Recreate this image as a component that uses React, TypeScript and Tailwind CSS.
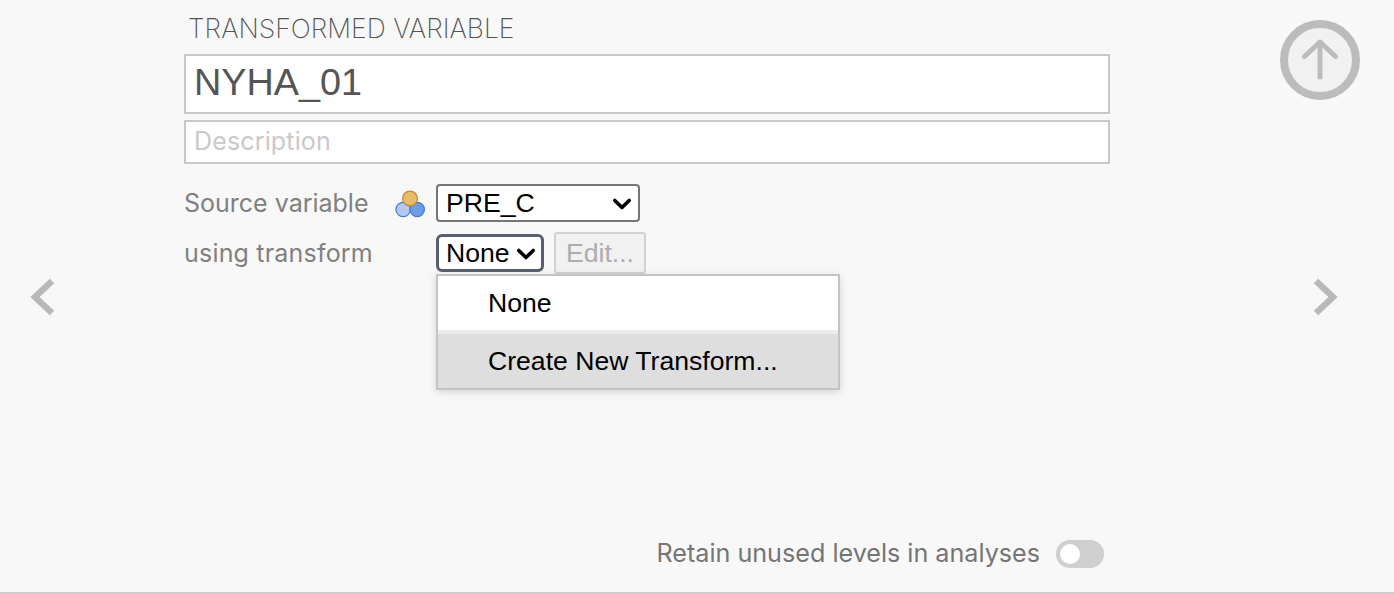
import React from 'react';

function SelectChevron() {
  return (
    <svg width="20" height="20" viewBox="0 0 20 20" fill="none" className="shrink-0">
      <path d="M2.8 6.5 L10 13.5 L17.2 6.5" stroke="#000" strokeWidth="3.6" strokeLinecap="round" strokeLinejoin="round" />
    </svg>
  );
}

function VariableIcon() {
  return (
    <svg width="32" height="32" viewBox="0 0 32 32" className="shrink-0">
      <circle cx="10.2" cy="21.5" r="7.2" fill="#b3c9ef" stroke="#3f77dc" strokeWidth="1.2" />
      <circle cx="24.2" cy="21.5" r="7.2" fill="#6f9be3" stroke="#3f77dc" strokeWidth="1.2" />
      <circle cx="17" cy="10.5" r="7.4" fill="#e8bb6b" stroke="#bd8c37" strokeWidth="1.2" />
    </svg>
  );
}

function NavChevron({ left }: { left?: boolean }) {
  return (
    <svg width="28" height="40" viewBox="0 0 28 40" fill="none">
      <path
        d={left ? 'M23 4 L6 20 L23 36' : 'M5 4 L22 20 L5 36'}
        stroke="#b9b9b9"
        strokeWidth="6.5"
        strokeLinejoin="miter"
      />
    </svg>
  );
}

export default function App() {
  return (
    <div className="h-[594px] w-[1394px] overflow-hidden bg-[#f8f8f8] font-['Inter',sans-serif]">
      <div className="flex h-[592px]">
        {/* colonne gauche */}
        <div className="flex w-[184px] shrink-0 flex-col items-start pl-[29px] pt-[277px]">
          <NavChevron left />
        </div>

        {/* formulaire */}
        <div className="relative w-[926px] shrink-0 pt-[13px]">
          <div className="h-[31px] pl-[4px] text-[26.5px] leading-[31px] font-extralight text-[#555]">
            TRANSFORMED VARIABLE
          </div>
          <div className="mt-[10px] h-[60px] border-2 border-[#c8c8c8] bg-white pl-[8px] font-['Liberation_Sans',sans-serif] text-[37.8px] leading-[53px] text-[#555]">
            NYHA_01
          </div>
          <div className="mt-[6px] h-[44px] border-2 border-[#c8c8c8] bg-white pl-[8px] text-[25px] leading-[38px] tracking-[0.15px] text-[#c9c9c9]">
            Description
          </div>

          <div className="mt-[20px] flex h-[40px] items-center">
            <div className="w-[209px] text-[25px] text-[#808080]">Source variable</div>
            <VariableIcon />
            <div className="ml-[11px] flex h-[38px] w-[204px] self-start items-center justify-between rounded-[4px] border-2 border-[#767676] bg-white pt-[2px] pr-[6px] pl-[8px] font-['Liberation_Sans',sans-serif] text-[26.6px] text-black">
              PRE_C
              <SelectChevron />
            </div>
          </div>

          <div className="mt-[8px] flex h-[42px] items-center">
            <div className="mt-[2px] w-[252px] text-[25px] tracking-[0.2px] text-[#808080]">using transform</div>
            <div className="mt-[2px] flex h-[38px] w-[108px] self-start items-center justify-between rounded-[6px] border-[3px] border-[#566070] bg-white pt-[2px] pr-[5px] pl-[7px] font-['Liberation_Sans',sans-serif] text-[26.6px] text-black">
              None
              <SelectChevron />
            </div>
            <div className="ml-[10px] flex h-[42px] w-[92px] items-center justify-center rounded-[3px] border-2 border-[#d3d3d3] bg-[#f1f1f1] pt-[2px] font-['Liberation_Sans',sans-serif] text-[26.6px] text-[#adadad]">
              Edit...
            </div>
          </div>

          {/* menu déroulant */}
          <div className="absolute top-[274px] left-[252px] w-[404px] border-2 border-[#c4c4c4] bg-white font-['Liberation_Sans',sans-serif] text-[26.6px] text-black shadow-[0_2px_8px_rgba(0,0,0,0.15)]">
            <div className="h-[54px] pl-[50px] leading-[54px]">None</div>
            <div className="h-[4px] bg-[#ececec]" />
            <div className="h-[54px] bg-[#dedede] pl-[50px] leading-[54px]">Create New Transform...</div>
          </div>

          <div className="absolute top-[535px] right-[6px] flex items-center">
            <span className="text-[25.15px] text-[#757575]">Retain unused levels in analyses</span>
            <div className="ml-[16px] flex h-[28px] w-[48px] items-center rounded-full bg-[#cfcfcf] pl-[4px]">
              <div className="h-[20px] w-[20px] rounded-full bg-white" />
            </div>
          </div>
        </div>

        {/* colonne droite */}
        <div className="flex flex-1 flex-col items-start">
          <div className="mt-[20px] ml-[170px] flex h-[80px] w-[80px] items-center justify-center rounded-full border-[8px] border-[#bcbcbc] bg-[#f1f1f1]">
            <svg width="44" height="44" viewBox="0 0 44 44" fill="none">
              <path d="M22 39 L22 4 M6.5 18.5 L22 4 L37.5 18.5" stroke="#bcbcbc" strokeWidth="5" strokeLinecap="round" strokeLinejoin="round" />
            </svg>
          </div>
          <div className="mt-[177px] ml-[201px]">
            <NavChevron />
          </div>
        </div>
      </div>
      <div className="h-[2px] bg-[#cccccc]" />
    </div>
  );
}
